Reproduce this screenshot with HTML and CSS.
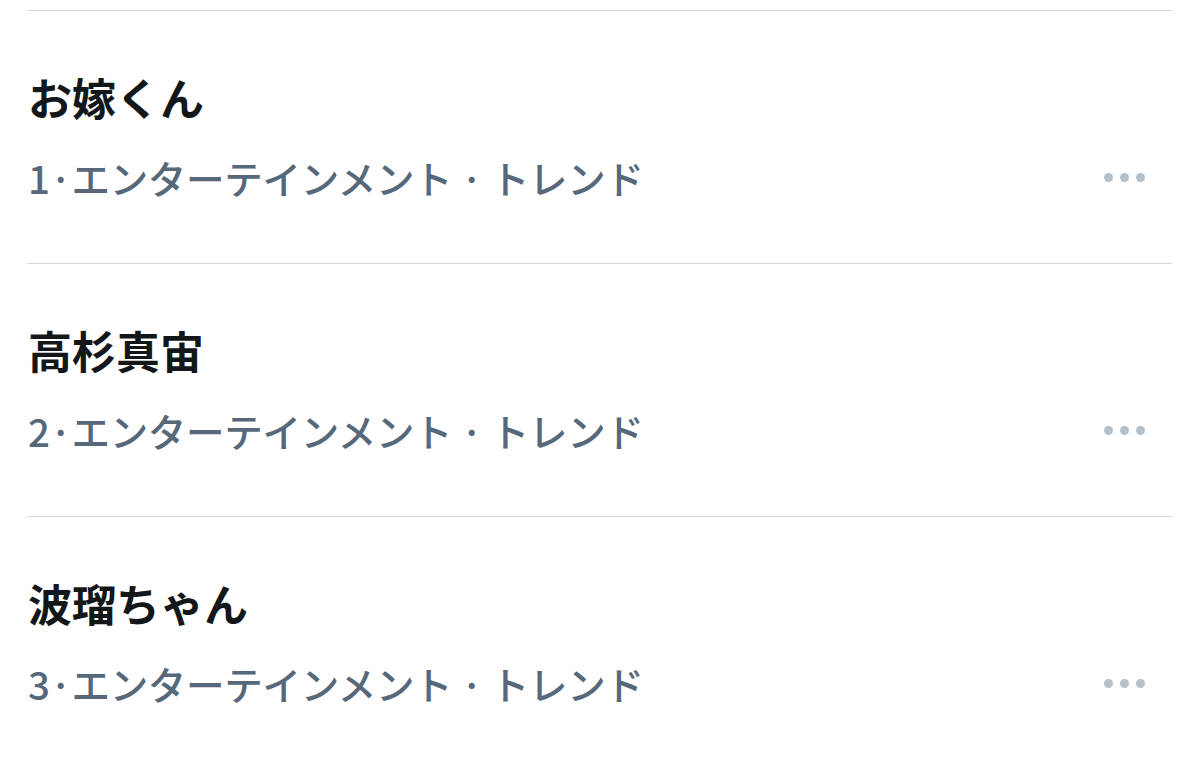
FILE: index.html
```html
<!DOCTYPE html>
<html lang="ja">
<head>
    <meta charset="UTF-8">
    <meta name="viewport" content="width=device-width, initial-scale=1.0">
    <title>トレンド</title>
    <link rel="stylesheet" href="styles.css">
</head>
<body>
    <div class="trends">
        <div class="trend">
            <div class="trend-text">
                <div class="trend-name">お嫁くん</div>
                <div class="trend-meta">1·エンターテインメント · トレンド</div>
            </div>
            <div class="more"><span></span><span></span><span></span></div>
        </div>
        <div class="trend">
            <div class="trend-text">
                <div class="trend-name">高杉真宙</div>
                <div class="trend-meta">2·エンターテインメント · トレンド</div>
            </div>
            <div class="more"><span></span><span></span><span></span></div>
        </div>
        <div class="trend">
            <div class="trend-text">
                <div class="trend-name">波瑠ちゃん</div>
                <div class="trend-meta">3·エンターテインメント · トレンド</div>
            </div>
            <div class="more"><span></span><span></span><span></span></div>
        </div>
    </div>
</body>
</html>
```

FILE: styles.css
```css
body {
    margin: 0;
    background: #fff;
    font-family: "Noto Sans CJK JP", "Noto Sans", sans-serif;
}

.trends {
    padding-top: 10px;
    margin: 0 28px 0 27px;
}

.trend {
    display: flex;
    align-items: flex-end;
    justify-content: space-between;
    border-top: 1.5px solid #d3d6d9;
    padding: 60px 0 62px 1px;
    height: 130px;
}

.trend-name {
    font-size: 44px;
    line-height: 52px;
    font-weight: 700;
    color: #14171a;
}

.trend-meta {
    margin-top: 30px;
    font-size: 38.5px;
    line-height: 48px;
    font-weight: 500;
    color: #56687a;
    letter-spacing: -0.3px;
}

.more {
    display: flex;
    gap: 7px;
    height: 48px;
    align-items: center;
    margin-right: 27px;
}

.more span {
    width: 9px;
    height: 9px;
    border-radius: 50%;
    background: #b4c0ca;
}
```
